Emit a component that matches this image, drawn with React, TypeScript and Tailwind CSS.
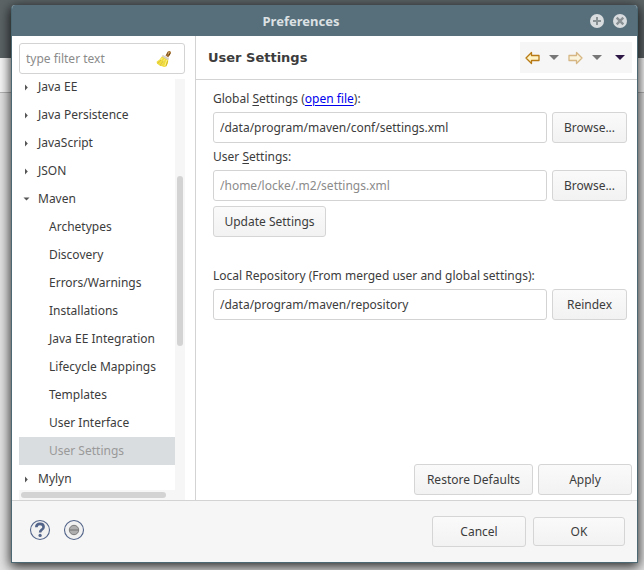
import type { ButtonHTMLAttributes, InputHTMLAttributes } from 'react';
import { twMerge } from 'tailwind-merge';

type TreeItem = { label: string; kind: 'closed' | 'open' | 'leaf'; selected?: boolean };

const items: TreeItem[] = [
  { label: 'Java EE', kind: 'closed' },
  { label: 'Java Persistence', kind: 'closed' },
  { label: 'JavaScript', kind: 'closed' },
  { label: 'JSON', kind: 'closed' },
  { label: 'Maven', kind: 'open' },
  { label: 'Archetypes', kind: 'leaf' },
  { label: 'Discovery', kind: 'leaf' },
  { label: 'Errors/Warnings', kind: 'leaf' },
  { label: 'Installations', kind: 'leaf' },
  { label: 'Java EE Integration', kind: 'leaf' },
  { label: 'Lifecycle Mappings', kind: 'leaf' },
  { label: 'Templates', kind: 'leaf' },
  { label: 'User Interface', kind: 'leaf' },
  { label: 'User Settings', kind: 'leaf', selected: true },
  { label: 'Mylyn', kind: 'closed' },
];

function Button({ className, ...props }: ButtonHTMLAttributes<HTMLButtonElement>) {
  return (
    <button
      type="button"
      className={twMerge(
        'h-[31px] shrink-0 rounded-[3px] border border-[#d5d5d5] bg-linear-to-b from-[#fafafa] to-[#f2f2f2] text-center whitespace-nowrap',
        className,
      )}
      {...props}
    />
  );
}

function TextField({ className, ...props }: InputHTMLAttributes<HTMLInputElement>) {
  return (
    <input
      type="text"
      className={twMerge(
        'h-[31px] min-w-0 flex-1 rounded-[3px] border border-[#d3d3d3] bg-white px-1.5 outline-none',
        className,
      )}
      {...props}
    />
  );
}

function Broom() {
  return (
    <svg width="16" height="18" viewBox="0 0 16 18" aria-hidden="true">
      <path d="M9.5 5.5 L11.8 1.5 Q13.5 .3 14.8 1.8 Q15.4 3 14.3 4.2 L12.2 7.6 Z" fill="#a5702c" />
      <path d="M11 5 L12.4 2.2 M12.8 5.6 L14 3.4" stroke="#5c3c18" strokeWidth="1" />
      <path d="M11.8 4.4 L13.2 2" stroke="#e0b878" strokeWidth="1" />
      <path d="M6.2 6 L12.3 9.4 L12 13 L10.3 16.6 L8 17 L6 16.2 L3.5 15.6 L1 13.6 L.6 11.8 L3.6 9.5 Z" fill="#f0dc3c" />
      <path d="M6.4 8 L2.5 12.5 M8.4 9.4 L5.2 15 M10.7 10.2 L8.8 16" stroke="#fff48e" strokeWidth="1" />
      <path d="M5 10 L1.6 13.2 M7.4 10.8 L4.5 15.6 M11.6 11 L10 16" stroke="#c9ab20" strokeWidth=".7" />
      <path d="M6.3 5.7 L12.6 9.3" stroke="#d6cfc4" strokeWidth="2" />
    </svg>
  );
}

function Arrow({ forward = false }: { forward?: boolean }) {
  return (
    <svg
      width="15"
      height="14"
      viewBox="0 0 15 14"
      aria-hidden="true"
      className={forward ? 'block rotate-180 opacity-50' : 'block'}
    >
      <path
        d="M1 7 L6.5 1.5 V4.5 H14 V9.5 H6.5 V12.5 Z"
        fill="#fff3c4"
        stroke="#b87a14"
        strokeWidth="1.3"
        strokeLinejoin="round"
      />
    </svg>
  );
}

function Caret({ color }: { color: string }) {
  return (
    <svg width="10" height="5" viewBox="0 0 10 5" aria-hidden="true" className="block">
      <path d="M0 0 H10 L5 5 Z" fill={color} />
    </svg>
  );
}

function Expander({ open }: { open: boolean }) {
  return (
    <svg width="7" height="7" viewBox="0 0 7 7" aria-hidden="true">
      <path d={open ? 'M.5 1.5 H6.5 L3.5 4.5 Z' : 'M2 .5 L4.8 3.5 L2 6.5 Z'} fill="#555" />
    </svg>
  );
}

export default function App() {
  return (
    <div className="relative isolate flex h-screen flex-col overflow-hidden pt-[5px] pr-1.5 pb-[7px] pl-[11px] font-['Noto_Sans',sans-serif] text-[12px] leading-4 text-[#3c3c3c]">
      {/* Application window behind the dialog */}
      <div className="absolute inset-0 -z-10 flex flex-col" aria-hidden="true">
        <div className="h-[58px] bg-[#5c6466]" />
        <div className="h-[35px] border-b border-[#b5b5b5] bg-[#f7f7f7]" />
        <div className="flex-1 bg-[#e2e2e2]" />
      </div>

      <section
        role="dialog"
        aria-labelledby="dialog-title"
        className="flex min-h-0 flex-1 flex-col overflow-hidden rounded-t-[4px] border-x border-b border-[#4c6873] bg-white shadow-[0_3px_12px_1px_rgba(0,0,0,0.8)]"
      >
        <header className="flex h-[31px] shrink-0 items-center bg-[#566f7b] pr-2.5">
          <h1 id="dialog-title" className="flex-1 text-center text-[13px] font-bold text-[#dde1e3]">
            Preferences
          </h1>
          <div className="flex gap-[9px]">
            <button type="button" aria-label="Maximize">
              <svg width="14" height="14" viewBox="0 0 14 14" className="block">
                <circle cx="7" cy="7" r="7" fill="#d9dcde" />
                <path d="M7 3 V11 M3 7 H11" stroke="#8a9195" strokeWidth="2" />
              </svg>
            </button>
            <button type="button" aria-label="Close">
              <svg width="14" height="14" viewBox="0 0 14 14" className="block">
                <circle cx="7" cy="7" r="7" fill="#d9dcde" />
                <path d="M3.7 3.7 L10.3 10.3 M10.3 3.7 L3.7 10.3" stroke="#8a9195" strokeWidth="2.4" />
              </svg>
            </button>
          </div>
        </header>

        <div className="flex min-h-0 flex-1">
          <nav className="flex w-[184px] shrink-0 flex-col border-r border-[#d3d3d3] pt-[7px] pr-2.5 pl-[7px]">
            <div className="mb-[5px] flex h-[31px] shrink-0 items-center rounded-[3px] border border-[#d3d3d3] pr-3">
              <input
                type="text"
                aria-label="Filter"
                placeholder="type filter text"
                className="min-w-0 flex-1 px-1.5 outline-none placeholder:text-[#8b8b8b]"
              />
              <button type="button" aria-label="Clear filter">
                <Broom />
              </button>
            </div>
            <div className="flex min-h-0 flex-1">
              <div className="flex min-w-0 flex-1 flex-col">
                <div className="min-h-0 flex-1 overflow-hidden">
                  <ul role="tree" className="-mt-1.5">
                    {items.map((item) => (
                      <li
                        key={item.label}
                        role="treeitem"
                        aria-selected={!!item.selected}
                        className={twMerge(
                          'flex h-7 items-center gap-2 whitespace-nowrap',
                          item.kind === 'leaf' ? 'pl-[30px]' : 'pl-1',
                          item.selected && 'bg-[#d9dde0] text-[#999]',
                        )}
                      >
                        {item.kind !== 'leaf' && <Expander open={item.kind === 'open'} />}
                        {item.label}
                      </li>
                    ))}
                  </ul>
                </div>
                <div className="h-2.5 shrink-0 bg-[#f6f6f6] p-0.5">
                  <div className="h-1.5 w-[145px] rounded-full bg-[#d3d3d3]" />
                </div>
              </div>
              <div className="w-2.5 shrink-0 bg-[#f6f6f6] px-0.5 pt-[97px]">
                <div className="h-[170px] rounded-full bg-[#d3d3d3]" />
              </div>
            </div>
          </nav>

          <main className="flex min-w-0 flex-1 flex-col">
            <div className="flex h-11 shrink-0 items-center justify-between border-b border-[#d3d3d3] pr-[5px] pl-3">
              <h2 className="font-['DejaVu_Sans',sans-serif] text-[13px] font-bold">User Settings</h2>
              <div className="flex h-[31px] items-center gap-[9px] bg-[#f6f6f6] pr-[7px] pl-[5px]">
                <button type="button" aria-label="Back"><Arrow /></button>
                <button type="button" aria-label="Back history"><Caret color="#777" /></button>
                <button type="button" aria-label="Forward"><Arrow forward /></button>
                <button type="button" aria-label="Forward history"><Caret color="#777" /></button>
                <button type="button" aria-label="View menu" className="pl-1"><Caret color="#2c1745" /></button>
              </div>
            </div>

            <form className="flex flex-1 flex-col pt-[11px] pr-2.5 pl-[17px]">
              <label htmlFor="global" className="mb-[5px]">
                Global <u className="underline-offset-2">S</u>ettings (
                <a href="#open" className="text-[#0000ee] underline underline-offset-2">open file</a>):
              </label>
              <div className="mb-1.5 flex gap-[5px]">
                <TextField id="global" defaultValue="/data/program/maven/conf/settings.xml" />
                <Button className="w-[75px]">Browse...</Button>
              </div>
              <label htmlFor="user" className="mb-[5px]">
                User <u className="underline-offset-2">S</u>ettings:
              </label>
              <div className="mb-[5px] flex gap-[5px]">
                <TextField id="user" placeholder="/home/locke/.m2/settings.xml" className="placeholder:text-[#8b8b8b]" />
                <Button className="w-[75px]">Browse...</Button>
              </div>
              <Button className="mb-[31px] w-[113px]">Update Settings</Button>
              <label htmlFor="repository" className="mb-[5px]">
                Local Repository (From merged user and global settings):
              </label>
              <div className="flex gap-[5px]">
                <TextField id="repository" readOnly value="/data/program/maven/repository" />
                <Button className="w-[75px]">Reindex</Button>
              </div>
            </form>

            <div className="flex justify-end gap-[5px] pr-[5px] pb-[5px]">
              <Button className="w-[119px]">Restore Defaults</Button>
              <Button className="w-[94px]">Apply</Button>
            </div>
          </main>
        </div>

        <footer className="flex h-[62px] shrink-0 items-center justify-between border-t border-[#d3d3d3] bg-[#f6f6f6] pr-3 pl-[17px]">
          <div className="flex gap-3 pb-1">
            <button type="button" aria-label="Help">
              <svg width="22" height="22" viewBox="0 0 22 22" className="block">
                <circle cx="11" cy="11" r="9.5" fill="#f1f1f1" stroke="#52648a" strokeWidth="1.1" />
                <path d="M7.3 8.2 Q7.4 4.9 11 4.9 Q14.6 4.9 14.6 7.9 Q14.6 9.6 12.6 10.8 Q11.1 11.8 11.1 13.6" fill="none" stroke="#52648a" strokeWidth="2.6" />
                <circle cx="11.1" cy="16.4" r="1.6" fill="#52648a" />
              </svg>
            </button>
            <button type="button" aria-label="Record">
              <svg width="22" height="22" viewBox="0 0 22 22" className="block">
                <circle cx="11" cy="11" r="9.5" fill="#f1f1f1" stroke="#52648a" strokeWidth="1.1" />
                <circle cx="11" cy="11" r="4.7" fill="#aeaeae" stroke="#7b7b7b" />
                <path d="M7 11 H15" stroke="#909090" strokeWidth="2" />
              </svg>
            </button>
          </div>
          <div className="flex items-center gap-[7px]">
            <Button className="w-[94px]">Cancel</Button>
            <Button className="h-[29px] w-[92px]">OK</Button>
          </div>
        </footer>
      </section>
    </div>
  );
}
